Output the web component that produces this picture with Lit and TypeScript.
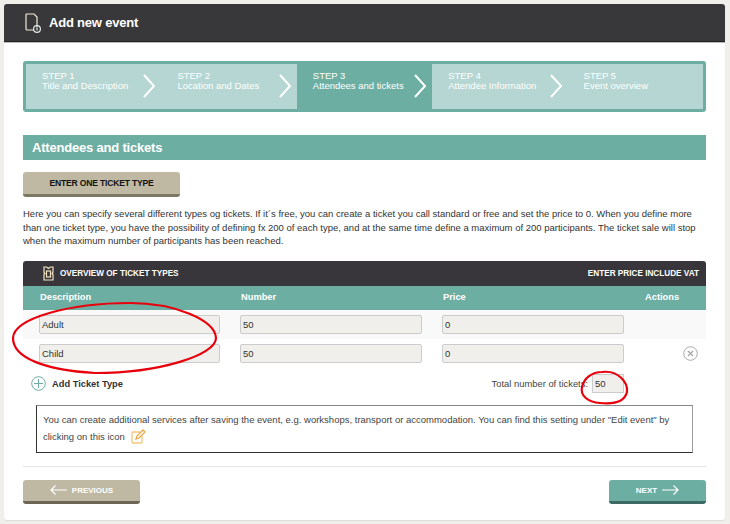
import { LitElement, html, css, svg } from "lit";
import { customElement } from "lit/decorators.js";

const steps = [
  ["STEP 1", "Title and Description"],
  ["STEP 2", "Location and Dates"],
  ["STEP 3", "Attendees and tickets"],
  ["STEP 4", "Attendee Information"],
  ["STEP 5", "Event overview"],
];
const rows = [
  ["Adult", "50", "0", false],
  ["Child", "50", "0", true],
];

@customElement("app-root")
export class AppRoot extends LitElement {
  static styles = css`
    :host { display: block; position: relative; width: 730px; height: 524px; background: #f0efeb; font-family: "Liberation Sans", Arial, sans-serif; overflow: hidden; box-sizing: border-box; padding: 4px 5px 0 4px; }
    * { box-sizing: border-box; }
    .card { background: #fff; height: 516px; border-radius: 3px; box-shadow: 0 1px 1px #ddd; }
    .top { height: 38px; background: #38383a; border-bottom: 1px solid #222; box-shadow: 0 1px 0 #bbb; border-radius: 3px 3px 0 0; display: flex; align-items: center; padding-left: 21px; gap: 7px; color: #fff; font-weight: bold; font-size: 13px; letter-spacing: -0.2px; }
    .top svg { display: block; }
    .body { padding: 19px 19px 0; }
    .steps { display: grid; grid-template-columns: repeat(5, 1fr); height: 51px; border: 3px solid #6daea3; border-radius: 3px; background: #b5d6d2; }
    .step { position: relative; padding: 7px 0 0 16px; color: #fff; font-size: 9.5px; line-height: 10px; }
    .step div { white-space: nowrap; }
    .step.on { background: #6daea3; }
    .step svg { position: absolute; right: 5px; top: 10px; }
    .h { margin-top: 23px; height: 25px; background: #6daea3; color: #fff; font-weight: bold; font-size: 13px; letter-spacing: -0.2px; line-height: 25px; padding-left: 9px; }
    .btn { display: flex; align-items: center; justify-content: center; border-radius: 3px; font-weight: bold; }
    .one { margin-top: 12px; width: 157px; height: 25px; background: #bfb9a3; border-bottom: 3px solid #7d7766; color: #111; font-size: 8.6px; letter-spacing: -0.2px; }
    p { margin: 10px 0 0; font-size: 9.5px; line-height: 13.7px; color: #333; }
    .tbar { margin-top: 13px; height: 25px; background: #38363b; border-radius: 3px 3px 0 0; color: #fff; font-weight: bold; font-size: 8.2px; display: flex; align-items: center; justify-content: space-between; padding: 0 7px 0 20px; }
    .tbar span { display: flex; align-items: center; gap: 6px; }
    .grid { display: grid; grid-template-columns: 201px 202px 202px 62px; padding-left: 16px; }
    .thead { height: 24px; background: #6daea3; color: #fff; font-weight: bold; font-size: 9.3px; line-height: 23px; }
    .thead div { padding-left: 1px; }
    .row { height: 29px; align-items: center; }
    .row.odd { background: #f9f9f9; }
    .inp { height: 19px; border: 1px solid #ccc; border-radius: 2px; background: #f0efeb; font-size: 9.5px; line-height: 17px; padding-left: 2px; color: #333; width: 182px; }
    .inp.first { width: 181px; }
    .x { justify-self: end; margin-right: 8px; display: block; }
    .foot { display: flex; align-items: center; justify-content: space-between; height: 25px; margin-top: 3px; padding: 0 82px 0 8px; }
    .add { display: flex; align-items: center; gap: 6px; font-weight: bold; font-size: 9.3px; color: #333; }
    .tot { display: flex; align-items: center; gap: 4px; font-size: 9.4px; color: #444; }
    .tot .inp { width: 32px; height: 19px; border-radius: 0; padding-left: 2px; }
    .note { margin: 9px 13px 0; height: 48px; border: 1px solid #333; border-top-color: #888; border-right-color: #999; padding: 6px 6px 0; font-size: 9.5px; line-height: 16.5px; color: #444; }
    .note svg { vertical-align: -4px; margin-left: 4px; }
    hr { margin: 13px 0 0; height: 1px; border: 0; background: #e3e3e3; }
    .nav { display: flex; justify-content: space-between; margin-top: 13px; }
    .nav .btn { height: 24px; color: #fff; font-size: 8px; gap: 5px; padding-bottom: 1px; }
    .prev { width: 117px; background: #bfb9a3; border-bottom: 3px solid #6b6656; }
    .next { width: 97px; background: #6daea3; border-bottom: 3px solid #3f6a63; }
    .ink { position: absolute; left: 0; top: 0; pointer-events: none; }
  `;

  render() {
    return html`
      <div class="card">
        <div class="top">
          <svg width="17" height="20" viewBox="0 0 17 20" fill="none" stroke="#f2ead8" stroke-width="1.2"><path d="M2 1h7l3 3v10M2 1q-1 0-1 1v14q0 1 1 1h7"/><circle cx="12" cy="16" r="3.4" stroke="#dfe9e6"/><path d="M12 14.500v3" stroke="#dfe9e6"/></svg>
          Add new event
        </div>
        <div class="body">
          <div class="steps">
            ${steps.map(([a, b], i) => html`<div class="step ${i === 2 ? "on" : ""}">
              <div>${a}</div><div>${b}</div>
              ${i < 4 ? html`<svg width="14" height="24" viewBox="0 0 14 24" fill="none" stroke="#fff" stroke-width="2"><path d="M2 1l10 11L2 23"/></svg>` : ""}
            </div>`)}
          </div>
          <div class="h">Attendees and tickets</div>
          <div class="btn one">ENTER ONE TICKET TYPE</div>
          <p>Here you can specify several different types og tickets. If it´s free, you can create a ticket you call standard or free and set the price to 0. When you define more than one ticket type, you have the possibility of defining fx 200 of each type, and at the same time define a maximum of 200 participants. The ticket sale will stop when the maximum number of participants has been reached.</p>
          <div class="tbar">
            <span><svg width="11" height="15" viewBox="0 0 11 15" fill="none" stroke="#f2e6c4" stroke-width="1.2"><path d="M1 1h2.500l2 1.500L7.500 1H10v5.500l-1 1 1 1V14H1V8.500l1-1-1-1z"/><rect x="3.500" y="5" width="4" height="6"/></svg>OVERVIEW OF TICKET TYPES</span>
            <b>ENTER PRICE INCLUDE VAT</b>
          </div>
          <div class="grid thead"><div>Description</div><div>Number</div><div>Price</div><div>Actions</div></div>
          ${rows.map(([d, n, p, x], i) => html`<div class="grid row ${i === 0 ? "odd" : ""}">
            <div class="inp first">${d}</div><div class="inp">${n}</div><div class="inp">${p}</div>
            ${x ? html`<svg class="x" width="15" height="15" viewBox="0 0 15 15" fill="none" stroke="#aaa" stroke-width="1"><circle cx="7.500" cy="7.500" r="6.800"/><path d="M5 5l5 5M10 5l-5 5" stroke-width="1.400"/></svg>` : html`<div></div>`}
          </div>`)}
          <div class="foot">
            <div class="add"><svg width="15" height="15" viewBox="0 0 15 15" fill="none" stroke="#6daea3" stroke-width="1"><circle cx="7.500" cy="7.500" r="6.800"/><path d="M7.500 3v9M3 7.500h9"/></svg>Add Ticket Type</div>
            <div class="tot">Total number of tickets: <div class="inp">50</div></div>
          </div>
          <div class="note">You can create additional services after saving the event, e.g. workshops, transport or accommodation. You can find this setting under "Edit event" by clicking on this icon
            <svg width="15" height="15" viewBox="0 0 15 15" fill="none" stroke="#f5c67a" stroke-width="1.300"><path d="M9 3H2q-1 0-1 1v9q0 1 1 1h8q1 0 1-1V7"/><path d="M5 10l1-3 6-6 2 2-6 6z" stroke="#e8a848"/></svg>
          </div>
          <hr />
          <div class="nav">
            <div class="btn prev"><svg width="17" height="10" viewBox="0 0 17 10" fill="none" stroke="#fff" stroke-width="1.200"><path d="M17 5H1M5.500.5L1 5l4.500 4.500"/></svg>PREVIOUS</div>
            <div class="btn next">NEXT<svg width="17" height="10" viewBox="0 0 17 10" fill="none" stroke="#fff" stroke-width="1.200"><path d="M0 5h16M11.500.5L16 5l-4.500 4.500"/></svg></div>
          </div>
        </div>
      </div>
      <svg class="ink" width="730" height="524" viewBox="0 0 730 524" fill="none" stroke="#e8000b" stroke-width="2.2">
        ${svg`<path d="M130 303C175 303 215 320 216 338C216 355 160 373 95 373C45 370 13 358 13 338C14 318 70 303 130 303Z"/>
        <path d="M602 372C618 370 628 382 627 392C624 404 610 404 600 403C588 402 580 396 582 387C584 378 592 372 602 372Z"/>`}
      </svg>
    `;
  }
}
